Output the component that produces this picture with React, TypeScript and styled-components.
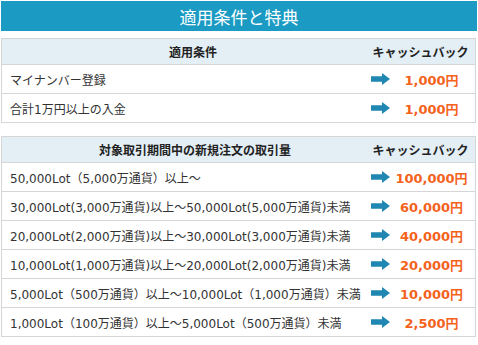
import styled, { createGlobalStyle } from 'styled-components';

const TEAL = '#1b9bc3';
const LINE = '#d6d6d6';
const ORANGE = '#f4621c';
const ARROW = '#1f87b2';

const GlobalStyle = createGlobalStyle`
  body {
    margin: 0;
    background: #fff;
    font-family: "DejaVu Sans", "Noto Sans CJK JP", sans-serif;
    color: #333;
  }
`;

const Page = styled.div`
  width: 478px;
  padding: 1px 1px 0 1px;
  box-sizing: border-box;
`;

const TitleBar = styled.div`
  height: 30px;
  width: 476px;
  background: ${TEAL};
  color: #fff;
  font-size: 17px;
  display: flex;
  align-items: center;
  justify-content: center;
  font-family: "Noto Sans CJK JP", sans-serif;
`;

const Table = styled.div<{ $gap: number }>`
  width: 475px;
  margin-top: ${(p) => p.$gap}px;
  border: 1px solid ${LINE};
  border-bottom: none;
  box-sizing: border-box;
`;

const Row = styled.div<{ $head?: boolean }>`
  display: grid;
  grid-template-columns: 1fr 109px;
  height: ${(p) => (p.$head ? 25 : 28)}px;
  border-bottom: 1px solid ${LINE};
  background: ${(p) => (p.$head ? '#e3eef5' : '#fff')};
  font-size: 12px;
  font-weight: ${(p) => (p.$head ? 'bold' : 'normal')};
  color: ${(p) => (p.$head ? '#222' : '#333')};
`;

const HeadCell = styled.div<{ $pl?: number }>`
  display: flex;
  align-items: center;
  justify-content: center;
  padding-left: ${(p) => p.$pl ?? 0}px;
  white-space: nowrap;
`;

const LabelCell = styled.div`
  display: flex;
  align-items: center;
  padding-left: 8px;
  white-space: nowrap;
`;

const AmountCell = styled.div`
  display: flex;
  align-items: center;
  padding-left: 5px;
`;

const Amount = styled.span`
  flex: 1;
  text-align: center;
  color: ${ORANGE};
  font-weight: bold;
  font-size: 13px;
  padding-right: 2px;
`;

const Arrow = () => (
  <svg width="19" height="12" viewBox="0 0 19 12">
    <path d="M0 3.3H11V0L19 6L11 12V8.7H0Z" fill={ARROW} />
  </svg>
);

const basic = [
  { label: 'マイナンバー登録', amount: '1,000円' },
  { label: '合計1万円以上の入金', amount: '1,000円' },
];

const volume = [
  { label: '50,000Lot（5,000万通貨）以上〜', amount: '100,000円' },
  { label: '30,000Lot(3,000万通貨)以上〜50,000Lot(5,000万通貨)未満', amount: '60,000円' },
  { label: '20,000Lot(2,000万通貨)以上〜30,000Lot(3,000万通貨)未満', amount: '40,000円' },
  { label: '10,000Lot(1,000万通貨)以上〜20,000Lot(2,000万通貨)未満', amount: '20,000円' },
  { label: '5,000Lot（500万通貨）以上〜10,000Lot（1,000万通貨）未満', amount: '10,000円' },
  { label: '1,000Lot（100万通貨）以上〜5,000Lot（500万通貨）未満', amount: '2,500円' },
];

const Rows = ({ items }: { items: { label: string; amount: string }[] }) => (
  <>
    {items.map((it) => (
      <Row key={it.label}>
        <LabelCell>{it.label}</LabelCell>
        <AmountCell>
          <Arrow />
          <Amount>{it.amount}</Amount>
        </AmountCell>
      </Row>
    ))}
  </>
);

export default function App() {
  return (
    <Page>
      <GlobalStyle />
      <TitleBar>適用条件と特典</TitleBar>
      <Table $gap={7}>
        <Row $head>
          <HeadCell $pl={18}>適用条件</HeadCell>
          <HeadCell>キャッシュバック</HeadCell>
        </Row>
        <Rows items={basic} />
      </Table>
      <Table $gap={13}>
        <Row $head>
          <HeadCell $pl={22}>対象取引期間中の新規注文の取引量</HeadCell>
          <HeadCell>キャッシュバック</HeadCell>
        </Row>
        <Rows items={volume} />
      </Table>
    </Page>
  );
}
